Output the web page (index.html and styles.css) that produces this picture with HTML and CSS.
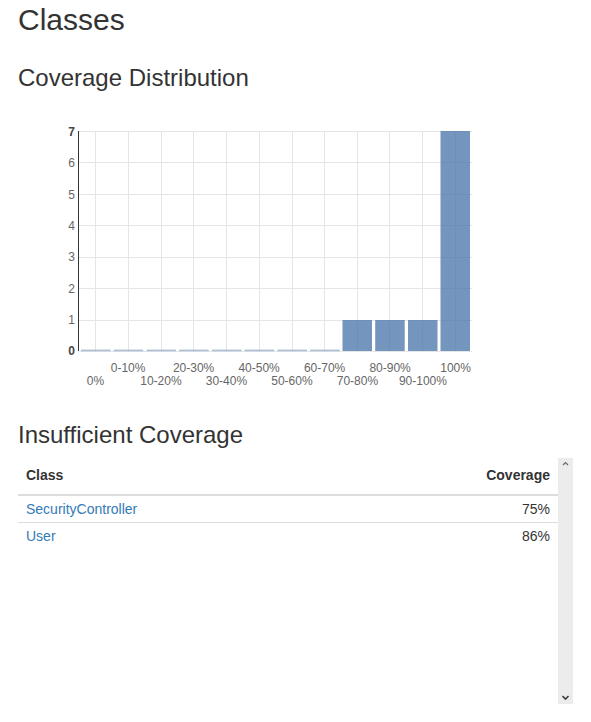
FILE: index.html
```html
<!DOCTYPE html>
<html lang="en">
<head>
<meta charset="utf-8">
<title>Dashboard</title>
<link rel="stylesheet" href="styles.css">
</head>
<body>
<div class="page">
  <h2 class="title">Classes</h2>
  <h3 class="section">Coverage Distribution</h3>
  <svg class="chart" width="555" height="300" viewBox="0 0 555 300" xmlns="http://www.w3.org/2000/svg">
    <g class="grid" stroke="#e5e5e5" stroke-width="1" fill="none">
      <line x1="61" x2="454" y1="31.5" y2="31.5"/>
      <line x1="61" x2="454" y1="62.5" y2="62.5"/>
      <line x1="61" x2="454" y1="94.5" y2="94.5"/>
      <line x1="61" x2="454" y1="125.5" y2="125.5"/>
      <line x1="61" x2="454" y1="157.5" y2="157.5"/>
      <line x1="61" x2="454" y1="188.5" y2="188.5"/>
      <line x1="61" x2="454" y1="220.5" y2="220.5"/>
      <line x1="61" x2="454" y1="251.5" y2="251.5"/>
      <line y1="31" y2="251" x1="77.5" x2="77.5"/>
      <line y1="31" y2="251" x1="110.5" x2="110.5"/>
      <line y1="31" y2="251" x1="143.5" x2="143.5"/>
      <line y1="31" y2="251" x1="175.5" x2="175.5"/>
      <line y1="31" y2="251" x1="208.5" x2="208.5"/>
      <line y1="31" y2="251" x1="241.5" x2="241.5"/>
      <line y1="31" y2="251" x1="274.5" x2="274.5"/>
      <line y1="31" y2="251" x1="306.5" x2="306.5"/>
      <line y1="31" y2="251" x1="339.5" x2="339.5"/>
      <line y1="31" y2="251" x1="371.5" x2="371.5"/>
      <line y1="31" y2="251" x1="404.5" x2="404.5"/>
      <line y1="31" y2="251" x1="437.5" x2="437.5"/>
    </g>
    <g class="bars">
      <rect class="bar-zero" x="63" y="249.6" width="29.5" height="1.6"/>
      <rect class="bar-zero" x="95.7" y="249.6" width="29.5" height="1.6"/>
      <rect class="bar-zero" x="128.5" y="249.6" width="29.5" height="1.6"/>
      <rect class="bar-zero" x="161.2" y="249.6" width="29.5" height="1.6"/>
      <rect class="bar-zero" x="194" y="249.6" width="29.5" height="1.6"/>
      <rect class="bar-zero" x="226.7" y="249.6" width="29.5" height="1.6"/>
      <rect class="bar-zero" x="259.5" y="249.6" width="29.5" height="1.6"/>
      <rect class="bar-zero" x="292.2" y="249.6" width="29.5" height="1.6"/>
      <rect class="bar" x="324.5" y="220" width="29.5" height="31"/>
      <rect class="bar" x="357.2" y="220" width="29.5" height="31"/>
      <rect class="bar" x="390" y="220" width="29.5" height="31"/>
      <rect class="bar" x="422.5" y="31" width="29.5" height="220"/>
    </g>
    <line x1="60.5" x2="60.5" y1="31" y2="251" stroke="#333" stroke-width="1"/>
    <g class="ylabels" text-anchor="end">
      <text x="57" y="255.3" class="strong">0</text>
      <text x="57" y="224.3">1</text>
      <text x="57" y="193">2</text>
      <text x="57" y="161.3">3</text>
      <text x="57" y="130">4</text>
      <text x="57" y="98.6">5</text>
      <text x="57" y="67.2">6</text>
      <text x="57" y="35.5" class="strong">7</text>
    </g>
    <g class="xlabels" text-anchor="middle">
      <text x="77.4" y="284.5">0%</text>
      <text x="110.1" y="272">0-10%</text>
      <text x="142.9" y="284.5">10-20%</text>
      <text x="175.6" y="272">20-30%</text>
      <text x="208.4" y="284.5">30-40%</text>
      <text x="241.1" y="272">40-50%</text>
      <text x="273.9" y="284.5">50-60%</text>
      <text x="306.6" y="272">60-70%</text>
      <text x="339.4" y="284.5">70-80%</text>
      <text x="372.1" y="272">80-90%</text>
      <text x="404.9" y="284.5">90-100%</text>
      <text x="437.6" y="272">100%</text>
    </g>
  </svg>
  <h3 class="section section-table">Insufficient Coverage</h3>
  <div class="scrollbox">
    <div class="table-wrap">
      <table class="coverage-table">
        <thead>
          <tr>
            <th class="col-class">Class</th>
            <th class="col-cov">Coverage</th>
          </tr>
        </thead>
        <tbody>
          <tr>
            <td><a href="#">SecurityController</a></td>
            <td class="col-cov">75%</td>
          </tr>
          <tr>
            <td><a href="#">User</a></td>
            <td class="col-cov">86%</td>
          </tr>
        </tbody>
      </table>
    </div>
    <div class="scrolltrack" aria-hidden="true">
      <svg class="arrow" width="15" height="14" viewBox="0 0 15 14" xmlns="http://www.w3.org/2000/svg">
        <polyline points="5,7 7.5,4.5 10,7" fill="none" stroke="#6a6a6a" stroke-width="1.2"/>
      </svg>
      <svg class="arrow" width="15" height="14" viewBox="0 0 15 14" xmlns="http://www.w3.org/2000/svg">
        <polyline points="4.5,6 7.5,9 10.5,6" fill="none" stroke="#3c3c3c" stroke-width="1.6"/>
      </svg>
    </div>
  </div>
</div>
</body>
</html>
```
FILE: styles.css
```css
html, body {
  margin: 0;
  padding: 0;
  background: #fff;
}

body {
  font-family: "Liberation Sans", Arial, sans-serif;
  font-size: 14px;
  line-height: 20px;
  color: #333;
}

.page {
  padding: 0 18px;
}

.title {
  font-size: 30px;
  line-height: 33px;
  font-weight: 400;
  margin: 3px 0 0;
}

.section {
  font-size: 24px;
  line-height: 26px;
  font-weight: 400;
  margin: 29px 0 0;
}

.chart {
  display: block;
  margin-top: 9px;
}

.chart text {
  font-family: "Liberation Sans", Arial, sans-serif;
  font-size: 12px;
  fill: #666;
}

.chart .ylabels .strong {
  font-weight: 700;
  fill: #444;
}

.bar {
  fill: #4572a7;
  fill-opacity: 0.75;
}

.bar-zero {
  fill: #4572a7;
  fill-opacity: 0.45;
}

.section-table {
  margin-top: 22px;
}

.scrollbox {
  margin-top: 10px;
  height: 246px;
  display: flex;
}

.table-wrap {
  flex: 1;
  min-width: 0;
}

.scrolltrack {
  width: 15px;
  flex: none;
  background: #ececec;
  display: flex;
  flex-direction: column;
  justify-content: space-between;
}

.arrow {
  display: block;
}

.coverage-table {
  width: 100%;
  border-collapse: collapse;
  border-spacing: 0;
}

.coverage-table th {
  text-align: left;
  font-weight: 700;
  padding: 7px 8px 9px;
  border-bottom: 2px solid #ddd;
}

.coverage-table td {
  padding: 3px 8px;
  border-top: 1px solid #ddd;
}

.coverage-table tbody tr:first-child td {
  border-top: 0;
}

.coverage-table .col-cov {
  text-align: right;
}

.coverage-table a {
  color: #337ab7;
  text-decoration: none;
}
```
